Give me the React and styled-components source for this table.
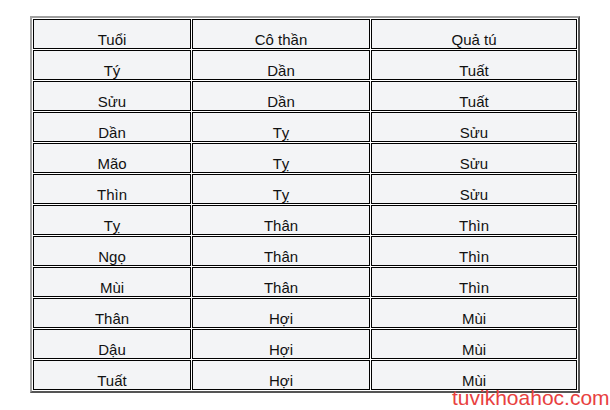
import styled, { createGlobalStyle } from 'styled-components';

const GlobalStyle = createGlobalStyle`
  html, body {
    margin: 0;
    padding: 0;
    background: #fff;
  }
  body {
    font-family: "Liberation Sans", Arial, sans-serif;
  }
`;

const Page = styled.div`
  position: relative;
  width: 610px;
  height: 410px;
  padding: 16px 0 0 30px;
  box-sizing: border-box;
`;

const Table = styled.table`
  width: 550px;
  border-collapse: separate;
  border-spacing: 1px;
  border-style: solid;
  border-width: 2px;
  border-color: #a0a0a0 #555 #555 #a0a0a0;
  background: #fff;
  table-layout: fixed;
`;

const Cell = styled.td`
  width: ${(props) => props.$w}px;
  box-sizing: border-box;
  border: 1px solid #000;
  background: #f3f4f6;
  padding: 11px 4px 0;
  height: 30px;
  line-height: 17px;
  font-size: 15px;
  color: #111;
  text-align: center;
  vertical-align: bottom;
`;

const Watermark = styled.div`
  position: absolute;
  left: 452px;
  top: 387px;
  font-family: "Liberation Sans", Arial, sans-serif;
  font-size: 21px;
  line-height: 21px;
  color: #e8413f;
  white-space: nowrap;
`;

const widths = [158, 178, 206];

const rows = [
  ['Tuổi', 'Cô thần', 'Quả tú'],
  ['Tý', 'Dần', 'Tuất'],
  ['Sửu', 'Dần', 'Tuất'],
  ['Dần', 'Tỵ', 'Sửu'],
  ['Mão', 'Tỵ', 'Sửu'],
  ['Thìn', 'Tỵ', 'Sửu'],
  ['Tỵ', 'Thân', 'Thìn'],
  ['Ngọ', 'Thân', 'Thìn'],
  ['Mùi', 'Thân', 'Thìn'],
  ['Thân', 'Hợi', 'Mùi'],
  ['Dậu', 'Hợi', 'Mùi'],
  ['Tuất', 'Hợi', 'Mùi'],
];

const App = () => {
  return (
    <Page>
      <GlobalStyle />
      <Table>
        <tbody>
          {rows.map((row, i) => (
            <tr key={i}>
              {row.map((text, j) => (
                <Cell key={j} $w={widths[j]}>
                  {text}
                </Cell>
              ))}
            </tr>
          ))}
        </tbody>
      </Table>
      <Watermark>tuvikhoahoc.com</Watermark>
    </Page>
  );
};

export default App;
